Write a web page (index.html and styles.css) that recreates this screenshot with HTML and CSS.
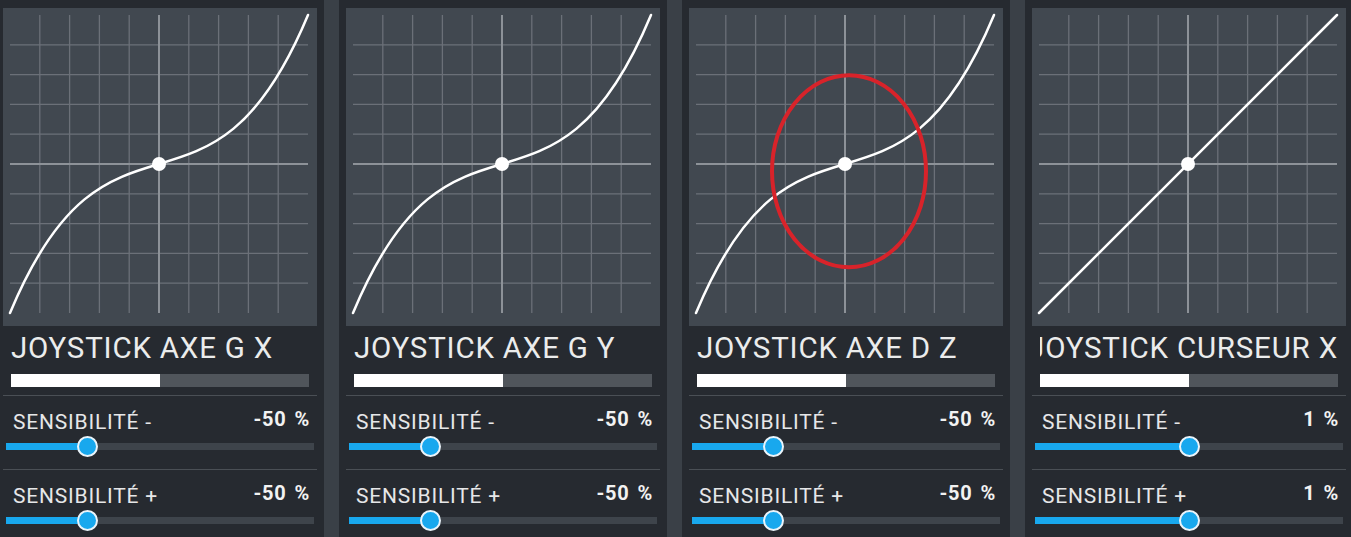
FILE: index.html
```html
<!DOCTYPE html>
<html lang="fr">
<head>
<meta charset="utf-8">
<title>Courbes joystick</title>
<link rel="stylesheet" href="styles.css">
</head>
<body>
<svg class="defs" width="0" height="0" aria-hidden="true">
  <defs>
    <symbol id="grid" viewBox="0 0 314 318">
      <path class="grid-line" d="M36.8 7V305M66.6 7V305M96.4 7V305M126.2 7V305M185.8 7V305M215.6 7V305M245.4 7V305M275.2 7V305M7 36.8H305M7 66.6H305M7 96.4H305M7 126.2H305M7 185.8H305M7 215.6H305M7 245.4H305M7 275.2H305"/>
      <path class="grid-axis" d="M156 7V305M7 156H305"/>
    </symbol>
  </defs>
</svg>
<main class="screen">
  <section class="panel">
    <div class="graph">
      <svg width="314" height="318" viewBox="0 0 314 318">
        <use href="#grid"/>
        <path class="curve" d="M7 305C106.33 66.6 205.67 245.4 305 7"/>
        <circle class="center-dot" cx="156" cy="156" r="7"/>
      </svg>
    </div>
    <div class="title"><span>JOYSTICK AXE G X</span></div>
    <div class="bar"><div class="bar-fill" style="width:50%"></div></div>
    <div class="setting">
      <div class="setting-head"><span class="label">SENSIBILITÉ -</span><span class="value">-50 %</span></div>
      <div class="slider" style="--p:0.25"><div class="track"><div class="track-fill"></div></div><div class="thumb"></div></div>
    </div>
    <div class="setting">
      <div class="setting-head"><span class="label">SENSIBILITÉ +</span><span class="value">-50 %</span></div>
      <div class="slider" style="--p:0.25"><div class="track"><div class="track-fill"></div></div><div class="thumb"></div></div>
    </div>
  </section>

  <section class="panel">
    <div class="graph">
      <svg width="314" height="318" viewBox="0 0 314 318">
        <use href="#grid"/>
        <path class="curve" d="M7 305C106.33 66.6 205.67 245.4 305 7"/>
        <circle class="center-dot" cx="156" cy="156" r="7"/>
      </svg>
    </div>
    <div class="title"><span>JOYSTICK AXE G Y</span></div>
    <div class="bar"><div class="bar-fill" style="width:50%"></div></div>
    <div class="setting">
      <div class="setting-head"><span class="label">SENSIBILITÉ -</span><span class="value">-50 %</span></div>
      <div class="slider" style="--p:0.25"><div class="track"><div class="track-fill"></div></div><div class="thumb"></div></div>
    </div>
    <div class="setting">
      <div class="setting-head"><span class="label">SENSIBILITÉ +</span><span class="value">-50 %</span></div>
      <div class="slider" style="--p:0.25"><div class="track"><div class="track-fill"></div></div><div class="thumb"></div></div>
    </div>
  </section>

  <section class="panel">
    <div class="graph">
      <svg width="314" height="318" viewBox="0 0 314 318">
        <use href="#grid"/>
        <path class="curve" d="M7 305C106.33 66.6 205.67 245.4 305 7"/>
        <circle class="center-dot" cx="156" cy="156" r="7"/>
        <ellipse class="annotation" cx="160" cy="163.3" rx="77" ry="96"/>
      </svg>
    </div>
    <div class="title"><span>JOYSTICK AXE D Z</span></div>
    <div class="bar"><div class="bar-fill" style="width:50%"></div></div>
    <div class="setting">
      <div class="setting-head"><span class="label">SENSIBILITÉ -</span><span class="value">-50 %</span></div>
      <div class="slider" style="--p:0.25"><div class="track"><div class="track-fill"></div></div><div class="thumb"></div></div>
    </div>
    <div class="setting">
      <div class="setting-head"><span class="label">SENSIBILITÉ +</span><span class="value">-50 %</span></div>
      <div class="slider" style="--p:0.25"><div class="track"><div class="track-fill"></div></div><div class="thumb"></div></div>
    </div>
  </section>

  <section class="panel">
    <div class="graph">
      <svg width="314" height="318" viewBox="0 0 314 318">
        <use href="#grid"/>
        <path class="curve" d="M7 305L305 7"/>
        <circle class="center-dot" cx="156" cy="156" r="7"/>
      </svg>
    </div>
    <div class="title title-overflow"><span>JOYSTICK CURSEUR X</span></div>
    <div class="bar"><div class="bar-fill" style="width:50%"></div></div>
    <div class="setting">
      <div class="setting-head"><span class="label">SENSIBILITÉ -</span><span class="value">1 %</span></div>
      <div class="slider" style="--p:0.505"><div class="track"><div class="track-fill"></div></div><div class="thumb"></div></div>
    </div>
    <div class="setting">
      <div class="setting-head"><span class="label">SENSIBILITÉ +</span><span class="value">1 %</span></div>
      <div class="slider" style="--p:0.505"><div class="track"><div class="track-fill"></div></div><div class="thumb"></div></div>
    </div>
  </section>
</main>
</body>
</html>
```
FILE: styles.css
```css
* { box-sizing: border-box; }

html, body {
  margin: 0;
  height: 100%;
  overflow: hidden;
}

body {
  background: #3a4047;
  font-family: Roboto, "Liberation Sans", sans-serif;
  color: #e8e9ea;
}

.defs {
  position: absolute;
  width: 0;
  height: 0;
}

.screen {
  display: flex;
  gap: 15px;
  margin-left: -4px;
  height: 100%;
}

.panel {
  flex: none;
  width: 328px;
  height: 100%;
  background: #262a30;
  padding: 8px 7px 0;
}

.graph {
  width: 314px;
  height: 318px;
  background: #414850;
}

.graph svg {
  display: block;
}

.grid-line {
  stroke: #6b7078;
  stroke-width: 1.3;
  fill: none;
}

.grid-axis {
  stroke: #8d9298;
  stroke-width: 2;
  fill: none;
}

.curve {
  stroke: #ffffff;
  stroke-width: 2.5;
  fill: none;
  stroke-linecap: round;
}

.center-dot {
  fill: #ffffff;
}

.annotation {
  fill: none;
  stroke: #d8232a;
  stroke-width: 4;
}

.title {
  margin: 4px 8px 0;
  height: 36px;
  display: flex;
  overflow: hidden;
  white-space: nowrap;
  font-size: 29.5px;
  line-height: 36px;
  letter-spacing: 0.8px;
  color: #ebecec;
}

.title-overflow {
  justify-content: flex-end;
}

.bar {
  margin: 8px 8px 0;
  height: 13px;
  background: #50555b;
}

.bar-fill {
  height: 100%;
  background: #ffffff;
}

.setting {
  margin-top: 8px;
  border-top: 1px solid #4a4f55;
  padding: 14px 0 12px;
}

.setting + .setting {
  margin-top: 0;
}

.setting-head {
  display: flex;
  justify-content: space-between;
  align-items: flex-start;
  padding: 0 7px 0 10px;
  height: 24px;
}

.label {
  font-size: 21px;
  line-height: 24px;
  letter-spacing: 0.8px;
  color: #e6e7e8;
}

.value {
  font-size: 20px;
  line-height: 20px;
  font-weight: 700;
  letter-spacing: 0.8px;
  word-spacing: 2px;
  color: #f2f2f2;
  margin-top: -1px;
}

.slider {
  position: relative;
  margin: 1px 3px 0;
  height: 22px;
  display: flex;
  align-items: center;
}

.track {
  width: 100%;
  height: 7px;
  background: #3e444b;
}

.track-fill {
  height: 100%;
  width: calc(var(--p) * (100% - 23px) + 10.5px);
  background: #18a8ee;
}

.thumb {
  position: absolute;
  top: 0.5px;
  left: calc(var(--p) * (100% - 23px));
  width: 21px;
  height: 21px;
  border-radius: 50%;
  background: #18a8ee;
  border: 2px solid #eaf4fa;
}
```
